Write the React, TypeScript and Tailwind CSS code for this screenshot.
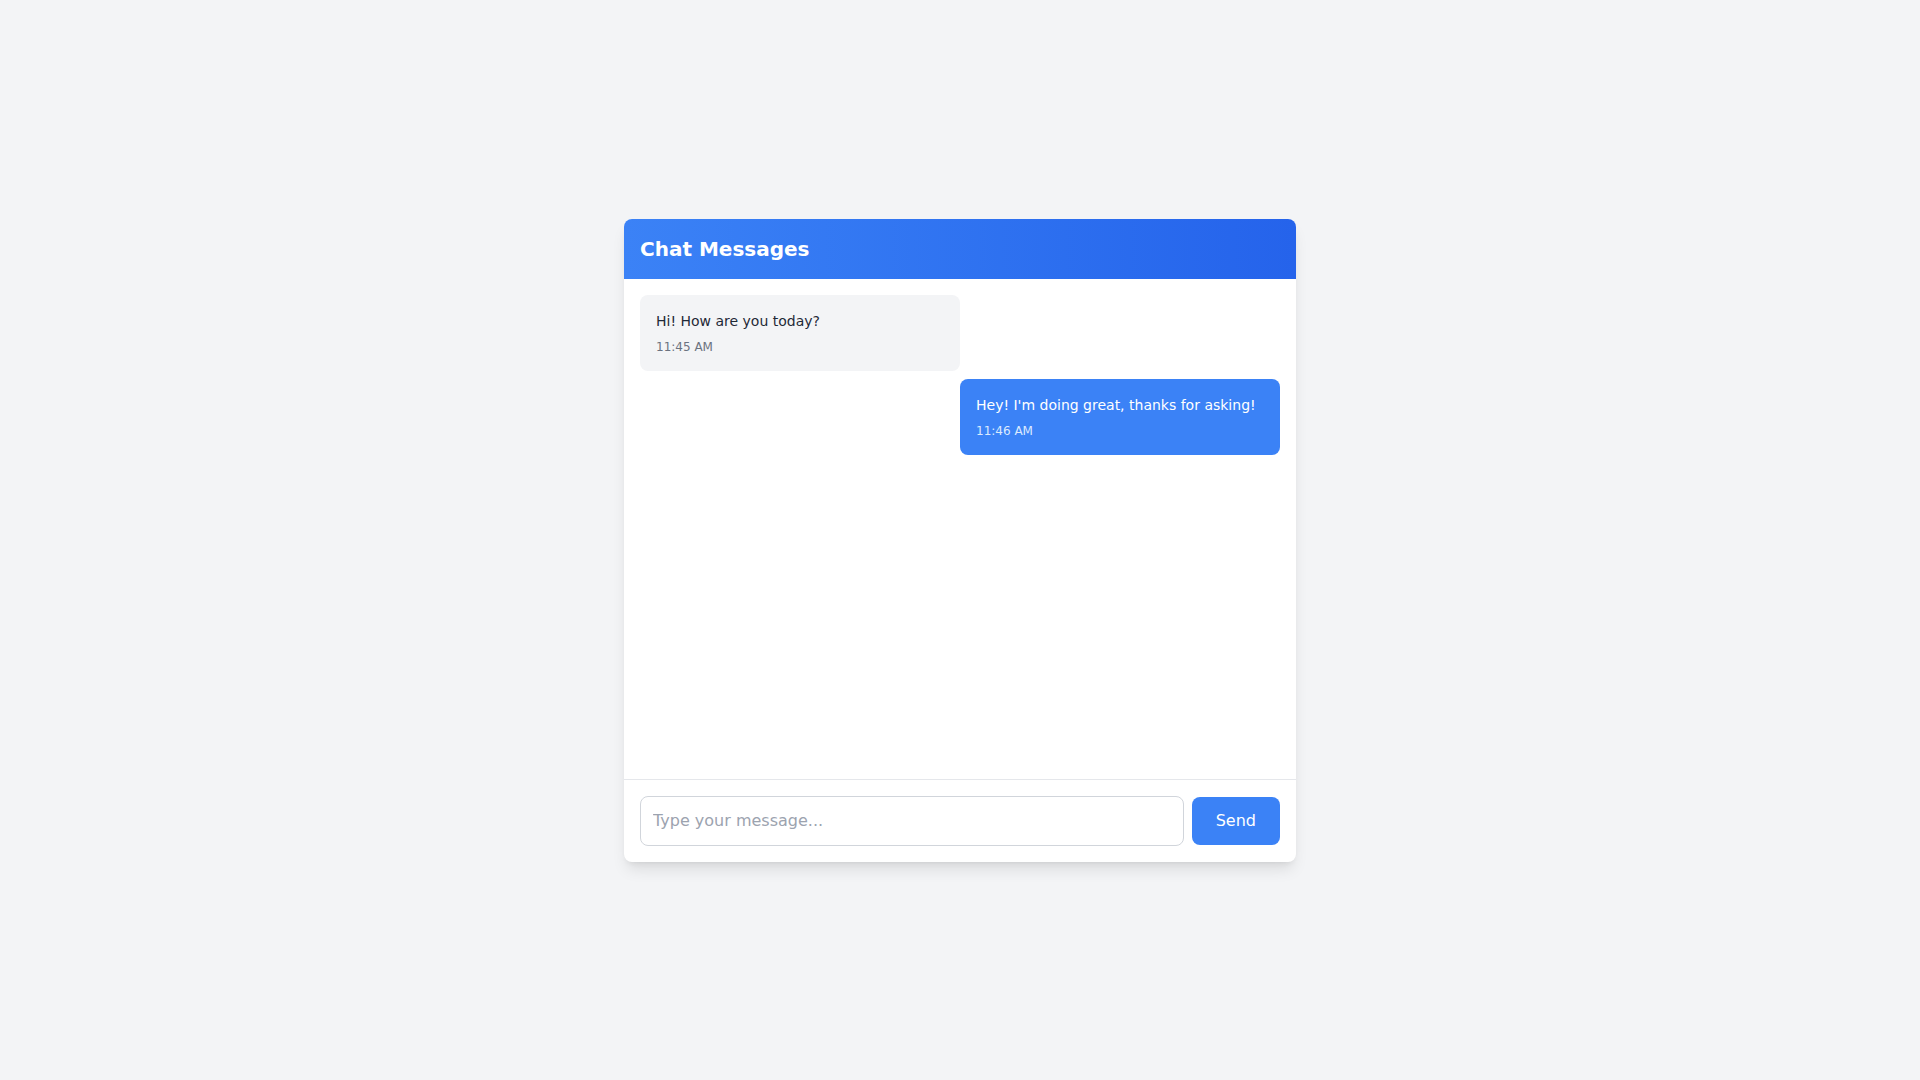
import React, { useState } from 'react'

type Message = {
    id: number
    text: string
    time: string
    mine: boolean
}

const messages: Message[] = [
    { id: 1, text: 'Hi! How are you today?', time: '11:45 AM', mine: false },
    { id: 2, text: "Hey! I'm doing great, thanks for asking!", time: '11:46 AM', mine: true },
]

export default function App() {
    const [draft, setDraft] = useState('')

    return (
        <div className="min-h-screen bg-[#f3f4f6] flex items-center justify-center font-['DejaVu_Sans',sans-serif]">
            <div className="w-full max-w-2xl bg-white rounded-lg shadow-lg overflow-hidden">
                <div className="bg-gradient-to-r from-[#3b82f6] to-[#2563eb] p-4">
                    <h1 className="text-xl font-bold text-white">Chat Messages</h1>
                </div>

                <div className="h-[500px] overflow-y-auto p-4 space-y-2">
                    {messages.map((m) => (
                        <div key={m.id} className={`flex ${m.mine ? 'justify-end' : 'justify-start'}`}>
                            <div
                                className={`w-80 rounded-lg p-4 ${
                                    m.mine ? 'bg-[#3b82f6] text-white' : 'bg-[#f3f4f6] text-[#1f2937]'
                                }`}
                            >
                                <p className="text-sm">{m.text}</p>
                                <p className={`text-xs mt-2 ${m.mine ? 'text-[#dbeafe]' : 'text-[#6b7280]'}`}>
                                    {m.time}
                                </p>
                            </div>
                        </div>
                    ))}
                </div>

                <div className="border-t border-[#e5e7eb] p-4">
                    <div className="flex items-center gap-2">
                        <input
                            type="text"
                            value={draft}
                            onChange={(e) => setDraft(e.target.value)}
                            placeholder="Type your message..."
                            className="flex-1 border border-[#d1d5db] rounded-lg px-3 py-3 text-base text-[#1f2937] placeholder-[#9ca3af] focus:outline-none"
                        />
                        <button className="bg-[#3b82f6] text-white rounded-lg px-6 py-3 text-base">
                            Send
                        </button>
                    </div>
                </div>
            </div>
        </div>
    )
}
